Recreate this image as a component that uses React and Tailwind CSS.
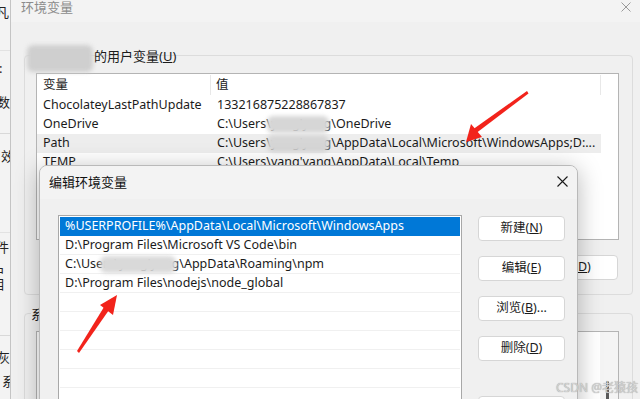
import React from 'react';

const font = "font-['Noto_Sans','Noto_Sans_CJK_SC',sans-serif]";

function Blur({ className }) {
  return <div className={`absolute bg-[#cfcfcf] blur-[2px] rounded-[6px] ${className}`} />;
}

function EnvButton({ label, className = '' }) {
  return (
    <div className={`h-[25px] w-[87px] rounded-[4px] border border-[#d6d6d6] bg-white flex items-center justify-center text-[12.5px] text-[#1b1b1b] ${className}`}>
      {label}
    </div>
  );
}

const userVars = [
  { name: 'ChocolateyLastPathUpdate', value: '133216875228867837' },
  { name: 'OneDrive', value: 'C:\\Users\\yang\'yang\\OneDrive', blur: true },
  { name: 'Path', value: 'C:\\Users\\yang\'yang\\AppData\\Local\\Microsoft\\WindowsApps;D:...', blur: true, active: true },
  { name: 'TEMP', value: 'C:\\Users\\yang\'yang\\AppData\\Local\\Temp' },
];

const paths = [
  '%USERPROFILE%\\AppData\\Local\\Microsoft\\WindowsApps',
  'D:\\Program Files\\Microsoft VS Code\\bin',
  'C:\\Users\\yang\'yang\\AppData\\Roaming\\npm',
  'D:\\Program Files\\nodejs\\node_global',
  '', '', '', '', '', '',
];

export default function App() {
  return (
    <div className={`relative w-[640px] h-[399px] overflow-hidden bg-[#f0f0f0] ${font}`}>
      {/* window behind, only its right edge shows */}
      <div className="absolute left-0 top-0 w-[10px] h-full overflow-hidden bg-[#f3f3f3] text-[13px] text-[#222]">
        <span className="absolute top-[6px] left-[-4px] leading-none">凡</span>
        <span className="absolute top-[62px] left-[-1px] leading-none">:</span>
        <span className="absolute top-[96px] left-[-3px] leading-none">数</span>
        <span className="absolute top-[150px] left-[1px] leading-none">效</span>
        <span className="absolute top-[241px] left-[-4px] leading-none">件</span>
        <span className="absolute top-[265px] left-[-9px] leading-none">中相</span>
        <span className="absolute top-[351px] left-[-3px] leading-none">灰</span>
        <span className="absolute top-[375px] left-[2px] leading-none">系</span>
        <div className="absolute left-0 right-0 top-[50px] border-t border-[#e2e2e2]" />
        <div className="absolute left-0 right-0 top-[133px] border-t border-[#d8d8d8]" />
        <div className="absolute left-0 right-0 top-[232px] border-t border-[#e2e2e2]" />
        <div className="absolute left-0 right-0 top-[335px] border-t border-[#d8d8d8]" />
      </div>

      {/* 环境变量 window */}
      <div className="absolute left-[10px] top-0 w-[650px] h-[420px] border-l border-[#c4c4c4] bg-[#f0f0f0]">
        <div className="h-[22px] bg-[#f3f3f3] flex items-start justify-between">
          <span className="pl-[10px] text-[13px] leading-[14px] text-[#8c8c8c]">环境变量</span>
          <svg width="10" height="10" viewBox="0 0 10 10" className="mr-[29px] mt-[2px]">
            <path d="M0.5 0.5 L9.5 9.5 M9.5 0.5 L0.5 9.5" stroke="#9a9a9a" strokeWidth="1" />
          </svg>
        </div>

        {/* user variables group */}
        <div className="relative ml-[13px] mt-[33px] w-[609px] h-[240px] rounded-[4px] border border-[#dcdcdc]">
          <Blur className="left-[2px] top-[-11px] w-[66px] h-[27px]" />
          <span className="absolute left-[69px] top-[-10px] text-[13px] leading-[20px] text-[#1b1b1b]">的用户变量(<u>U</u>)</span>
          <div className="ml-[11px] mt-[17px] w-[583px] h-[167px] border border-[#b4b4b4] bg-white">
            <div className="flex h-[22px] text-[12.5px] text-[#1b1b1b]">
              <div className="w-[174px] shrink-0 pl-[6px] flex items-center border-r border-[#e8e8e8] my-[1px]">变量</div>
              <div className="w-[390px] shrink-0 pl-[5px] flex items-center border-r border-[#e8e8e8] my-[1px]">值</div>
            </div>
            {userVars.map((v) => (
              <div key={v.name} className={`relative flex h-[19px] w-[564px] items-center text-[12.5px] text-[#1b1b1b] whitespace-nowrap ${v.active ? 'bg-[#ededed]' : ''}`}>
                <div className="w-[174px] shrink-0 pl-[6px]">{v.name}</div>
                <div className="pl-[6px]">{v.value}</div>
                {v.blur && <Blur className="left-[230px] top-[1px] w-[62px] h-[17px] bg-[#d6d6d6]" />}
              </div>
            ))}
          </div>
          <div className="absolute left-[497px] top-[199px]">
            <div className="h-[25px] w-[96px] rounded-[4px] border border-[#d6d6d6] bg-white flex items-center justify-center text-[12.5px] text-[#1b1b1b]">
              删除(<u>D</u>)
            </div>
          </div>
        </div>

        {/* system variables group */}
        <div className="relative ml-[13px] mt-[18px] w-[609px] h-[120px] rounded-[4px] border border-[#dcdcdc]">
          <span className="absolute left-[6px] top-[-10px] text-[13px] leading-[20px] text-[#1b1b1b] bg-[#f0f0f0] pr-[2px]">系统变量(<u>S</u>)</span>
          <div className="relative ml-[11px] mt-[17px] w-[583px] h-[120px] border border-[#b4b4b4] bg-white">
            <div className="absolute right-0 top-0 w-[18px] h-full bg-[#f4f4f4]" />
            <div className="absolute right-[9px] top-[49px] w-[3px] h-[30px] bg-[#5a5a5a] rounded-full" />
          </div>
        </div>
      </div>

      {/* 编辑环境变量 dialog */}
      <div className="absolute left-[39px] top-[165px] w-[539px] h-[260px] rounded-t-[8px] border border-[#b9b9b9] bg-[#f0f0f0] shadow-[0_4px_24px_rgba(0,0,0,0.28)] overflow-hidden">
        <div className="h-[33px] bg-[#f3f3f3] flex items-center justify-between">
          <span className="pl-[9px] text-[13px] text-[#111]">编辑环境变量</span>
          <svg width="11" height="11" viewBox="0 0 11 11" className="mr-[9px] mb-[2px]">
            <path d="M0.5 0.5 L10.5 10.5 M10.5 0.5 L0.5 10.5" stroke="#1a1a1a" strokeWidth="1.1" />
          </svg>
        </div>
        <div className="flex pl-[18px] pt-[16px]">
          <div className="w-[404px] h-[250px] border border-[#a8a8a8] bg-white p-[1px]">
            {paths.map((p, i) => (
              <div
                key={i}
                className={`relative h-[19px] flex items-center pl-[5px] text-[12.5px] whitespace-nowrap ${i === 0 ? 'bg-[#0078d7] text-white' : 'border-b border-[#f0f0f0] text-[#1b1b1b]'}`}
              >
                {p}
                {i === 2 && <Blur className="left-[40px] top-[1px] w-[76px] h-[17px] bg-[#d9d9d9]" />}
              </div>
            ))}
          </div>
          <div className="ml-[16px] mt-[1px] flex flex-col gap-[15px]">
            <EnvButton label={<span>新建(<u>N</u>)</span>} />
            <EnvButton label={<span>编辑(<u>E</u>)</span>} />
            <EnvButton label={<span>浏览(<u>B</u>)...</span>} />
            <EnvButton label={<span>删除(<u>D</u>)</span>} />
            <EnvButton label="" className="mt-[20px]" />
          </div>
        </div>
      </div>

      {/* annotation arrows */}
      <svg className="absolute inset-0 pointer-events-none" width="640" height="399">
        <polygon points="527,91 528.5,93.5 475,134 472,130" fill="#f2231b" />
        <polygon points="466,142 471,124 482,137" fill="#f2231b" />
        <polygon points="79,353 77,351 104,307 109,310" fill="#f2231b" />
        <polygon points="117,295 100,305 113,315" fill="#f2231b" />
      </svg>

      <div className="absolute left-[556px] top-[380px] text-[12px] leading-[16px] text-[#d2d2d2] [text-shadow:0_0_1px_#8a8a8a]">
        CSDN @老猿孩
      </div>
    </div>
  );
}
